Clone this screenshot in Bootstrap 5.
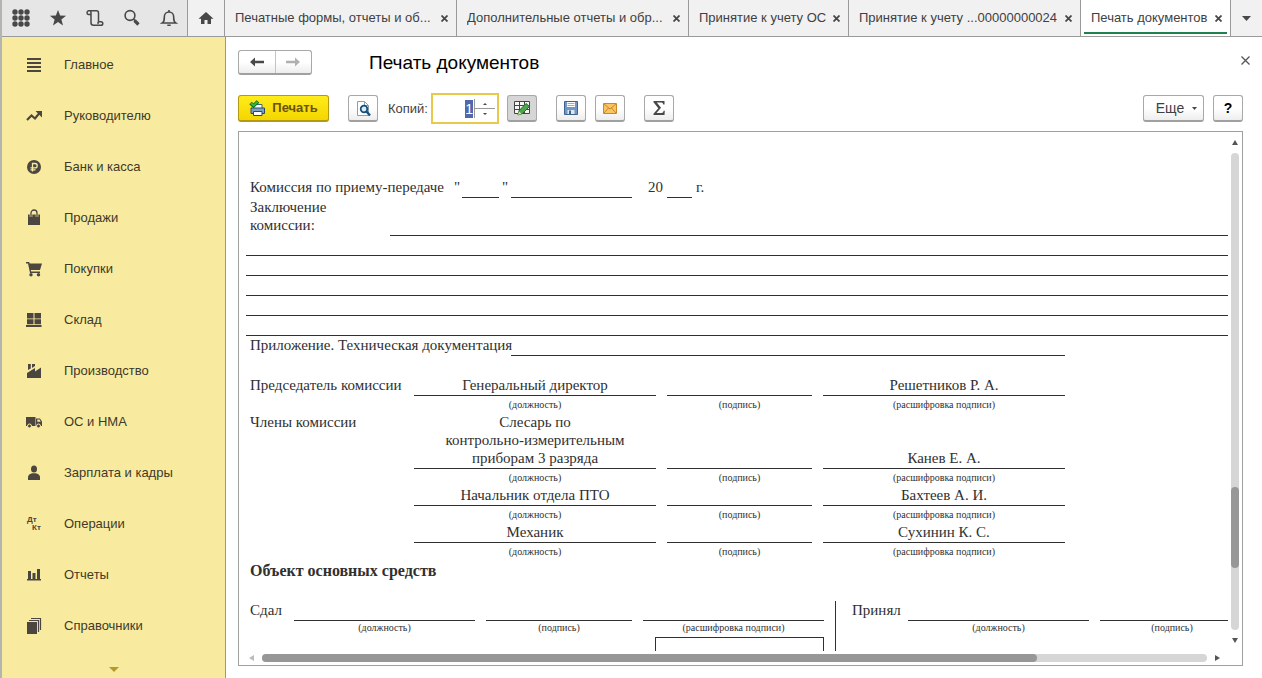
<!DOCTYPE html>
<html lang="ru">
<head>
<meta charset="utf-8">
<meta name="viewport" content="width=device-width, initial-scale=1">
<title>Печать документов</title>
<link href="https://cdn.jsdelivr.net/npm/bootstrap@5.3.0/dist/css/bootstrap.min.css" rel="stylesheet">
<style>
  body { font-family: "Liberation Sans", Arial, sans-serif; font-size: 13px; line-height: 18px; color: #3f3f3f; background: #fff; }
  svg { display: block; flex: none; }
  .app-shell { border-left: 2px solid #b4b4b0; }

  /* top bar */
  .topbar { height: 37px; background: #f1f1f1; border-bottom: 1px solid #9a9a9a; }
  .tools { width: 186px; background: #e6e6e6; border-right: 1px solid #9a9a9a; }
  .tools button, .home-tab, .more-tabs { border: 0; background: none; padding: 0; color: #484848; }
  .tools button { width: 37px; }
  .topbar .home-tab { width: 37px; border-right: 1px solid #9a9a9a; }
  .doc-tab { flex: 0 1 auto; min-width: 0; border-right: 1px solid #9a9a9a; padding: 0 5px 0 10px; position: relative; }
  .doc-tab a { color: #3f3f3f; text-decoration: none; }
  .tab-wide { flex-basis: 232px; }
  .tab-mid { flex-basis: 160px; }
  .tab-current { flex-basis: 150px; background: #fff; }
  .tab-current::after { content: ""; position: absolute; left: 3px; right: 3px; bottom: 2px; height: 2px; background: #1f8050; }
  .tab-close { border: 0; background: none; padding: 3px; color: #484848; }
  .more-tabs { width: 31px; }

  /* sections */
  .side { width: 224px; padding-top: 2px; background: #f8eb9f; border-right: 1px solid #a39b62; }
  .side a { height: 51px; flex: none; padding-left: 22px; gap: 20px; color: #40392a; text-decoration: none; }
  .side svg { color: #4b4640; }
  .side-more { padding-top: 16px; }

  /* form header and commands */
  .work { padding: 12px 19px 12px 12px; min-width: 0; }
  .form-title { font-size: 19px; line-height: 24px; color: #000; margin: 2px 0 0 57px; font-weight: 400; }
  .commands { margin-top: 18px; }
  .near { margin-left: 9px; }
  .apart { margin-left: 19px; }
  .cmd { height: 27px; border: 1px solid #a8a8a8; border-bottom: 2px solid #a0a0a0; border-radius: 3px; background: linear-gradient(#fff, #fff 50%, #ededed); color: #3f3f3f; padding: 0; display: flex; align-items: center; justify-content: center; }
  .cmd-icon { width: 30px; }
  .cmd-pressed { background: #d6d6d6; }
  .cmd-print { width: 91px; gap: 6px; background: linear-gradient(#ffec1a, #f4d600); border-color: #b39a12; color: #6b5306; font-weight: 700; }
  .cmd-more { width: 61px; gap: 8px; padding-left: 6px; font-size: 14px; }
  .cmd-help { font-size: 14px; font-weight: 700; color: #000; }
  .nav-pair { width: 74px; height: 25px; }
  .nav-pair button { flex: 1; border: 0; background: none; padding: 0; }
  .nav-pair button + button { border-left: 1px solid #c4c4c4; }
  .copies-label { margin: 0 3px 0 10px; }
  .copies { width: 68px; height: 31px; border: 2px solid #e8c94b; background: #fff; padding: 4px 2px 4px 4px; }
  .copies input { width: 100%; min-width: 0; border: 0; padding: 0 1px 0 0; outline: 0; text-align: right; font-size: 14px; line-height: 18px; color: #3f3f3f; appearance: textfield; }
  .copies input::-webkit-inner-spin-button { display: none; }
  .copies input::selection { background: #4f68ae; color: #fff; }
  .spin { flex: none; width: 21px; border-left: 1px solid #999; }
  .spin button { flex: 1; border: 0; background: none; padding: 0; }
  .spin button + button { border-top: 1px solid #999; }
  .close-form { border: 0; background: none; padding: 2px 2px 6px; margin-right: -10px; color: #555; }

  /* printed sheet */
  .viewer { border: 1px solid #a0a0a0; min-height: 0; margin-top: 7px; }
  .sheet { font-family: "Liberation Serif", "Times New Roman", serif; font-size: 15px; line-height: 18px; color: #303030; padding: 46px 0 0 7px; min-width: 0; overflow: hidden; white-space: nowrap; }
  .lbl { padding-left: 4px; }
  .ln { border-bottom: 1px solid #303030; min-height: 20px; padding-bottom: 1px; text-align: center; }
  .cap { font-size: 10px; line-height: 18px; height: 17px; text-align: center; }
  .cap-low { line-height: 14px; height: 16px; }
  .date-row { display: grid; grid-template-columns: 208px 8px 37px 12px 121px 35px 25px auto; }
  .findings { padding-bottom: 2px; width: 144px; }
  .annex { width: 265px; }
  .annex + .ln { width: 554px; }
  .signs-grid { display: grid; grid-template-columns: 168px 242px 11px 145px 11px 242px; align-items: end; padding-top: 20px; }
  .signs-grid .lbl { align-self: start; }
  .subject { font-size: 16px; font-weight: 700; height: 41px; padding-top: 2px; }
  .handover { display: grid; grid-template-columns: 48px 181px 11px 146px 11px 181px 11px 73px 181px 11px minmax(0, 1fr); }
  .divider { border-left: 1px solid #303030; }
  .stampbox { border: 1px solid #303030; border-bottom: 0; margin-left: 12px; }

  /* scroll bars */
  .bar-v { width: 14px; padding: 8px 0; }
  .bar-v .track { width: 8px; }
  .bar-h { height: 14px; padding: 0 22px 0 10px; }
  .bar-h .thumb { height: 8px; }
  .track { background: #d6d6d6; border-radius: 4px; flex: 1; }
  .thumb { background: #979797; border-radius: 4px; }
</style>
</head>
<body>
<div class="app-shell d-flex flex-column vh-100 overflow-hidden">
  <header class="topbar d-flex flex-shrink-0">
    <div class="tools d-flex align-items-center flex-shrink-0">
      <button class="d-flex justify-content-center" aria-label="Меню"><svg width="18" height="18" fill="currentColor"><g id="dots"><circle cx="3" cy="3" r="2.7"/><circle cx="9" cy="3" r="2.7"/><circle cx="15" cy="3" r="2.7"/></g><use href="#dots" y="6"/><use href="#dots" y="12"/></svg></button>
      <button class="d-flex justify-content-center" aria-label="Избранное"><svg width="18" height="18" viewBox="0 0 18 18" fill="currentColor"><path d="M9 1l2.1 5.6 6 .2-4.7 3.7 1.6 5.9L9 13l-5 3.4 1.6-5.9L.9 6.8l6-.2z"/></svg></button>
      <button class="d-flex justify-content-center" aria-label="История"><svg width="18" height="18" viewBox="0 0 18 18" fill="none" stroke="currentColor" stroke-width="1.500"><path d="M5 5.500H2.500A1.900 1.900 0 0 1 2.500 1.800H10.500Q12.500 1.800 12.500 4V12.700H15A1.800 1.800 0 0 1 15 16.300H7.500Q5 16.300 5 13.800V3.500Q5 2 4 1.900M12.500 12.700Q11.500 13.500 12.300 15"/></svg></button>
      <button class="d-flex justify-content-center" aria-label="Поиск"><svg width="18" height="18" viewBox="0 0 18 18" fill="none" stroke="currentColor"><circle cx="7" cy="6.500" r="4.900" stroke-width="1.600"/><path d="M10.400 10L12 11.600" stroke-width="1.500"/><path d="M11.500 11.500l4 4" stroke-width="3.200"/></svg></button>
      <button class="d-flex justify-content-center" aria-label="Уведомления"><svg width="18" height="18" viewBox="0 0 18 18" fill="none" stroke="currentColor" stroke-width="1.600"><path d="M2.300 14C4.500 12.500 4.300 10.500 4.300 8C4.300 4.800 6.500 3 9 3S13.700 4.800 13.700 8C13.700 10.500 13.500 12.500 15.700 14Z"/><path d="M9 1v2M7.300 16.300h3.400"/></svg></button>
    </div>
    <button class="home-tab d-flex align-items-center justify-content-center flex-shrink-0" aria-label="Начальная страница"><svg width="16" height="14" fill="currentColor"><path d="M8 1l7.500 6.800H13V13H9.500V9h-3v4H3V7.800H.5z"/></svg></button>
    <div class="doc-tab tab-wide d-flex align-items-center justify-content-between"><a href="#" class="text-truncate">Печатные формы, отчеты и об...</a><button class="tab-close" aria-label="Закрыть"><svg width="7" height="7" stroke="currentColor" stroke-width="1.800"><path d="M.5.5l6 6M6.500.5l-6 6"/></svg></button></div>
    <div class="doc-tab tab-wide d-flex align-items-center justify-content-between"><a href="#" class="text-truncate">Дополнительные отчеты и обр...</a><button class="tab-close" aria-label="Закрыть"><svg width="7" height="7" stroke="currentColor" stroke-width="1.800"><path d="M.5.5l6 6M6.500.5l-6 6"/></svg></button></div>
    <div class="doc-tab tab-mid d-flex align-items-center justify-content-between"><a href="#" class="text-truncate">Принятие к учету ОС</a><button class="tab-close" aria-label="Закрыть"><svg width="7" height="7" stroke="currentColor" stroke-width="1.800"><path d="M.5.5l6 6M6.500.5l-6 6"/></svg></button></div>
    <div class="doc-tab tab-wide d-flex align-items-center justify-content-between"><a href="#" class="text-truncate">Принятие к учету ...00000000024</a><button class="tab-close" aria-label="Закрыть"><svg width="7" height="7" stroke="currentColor" stroke-width="1.800"><path d="M.5.5l6 6M6.500.5l-6 6"/></svg></button></div>
    <div class="doc-tab tab-current d-flex align-items-center justify-content-between"><a href="#" class="text-truncate">Печать документов</a><button class="tab-close" aria-label="Закрыть"><svg width="7" height="7" stroke="currentColor" stroke-width="1.800"><path d="M.5.5l6 6M6.500.5l-6 6"/></svg></button></div>
    <button class="more-tabs d-flex align-items-center justify-content-center ms-auto" aria-label="Все вкладки"><svg width="9" height="5" fill="currentColor"><path d="M0 0h9L4.500 5z"/></svg></button>
  </header>

  <div class="d-flex flex-grow-1 overflow-hidden">
    <nav class="side d-flex flex-column flex-shrink-0" aria-label="Разделы">
      <a href="#" class="d-flex align-items-center"><svg width="20" height="20" stroke="currentColor" stroke-width="2"><path d="M3 4h14M3 8h14M3 12h14M3 16h14"/></svg>Главное</a>
      <a href="#" class="d-flex align-items-center"><svg width="20" height="20" fill="none" stroke="currentColor" stroke-width="2.200"><path d="M3 14l4.500-4.500 3.500 3L15.500 7"/><path d="M11.500 5H18v6.500z" fill="currentColor" stroke="none"/></svg>Руководителю</a>
      <a href="#" class="d-flex align-items-center"><svg width="20" height="20"><circle cx="10" cy="10" r="7" fill="currentColor"/><path d="M8.500 14.500V6.500H11a2.200 2.200 0 0 1 0 4.400H6.500M6.500 12.800h5" fill="none" stroke="#f8eb9f" stroke-width="1.300"/></svg>Банк и касса</a>
      <a href="#" class="d-flex align-items-center"><svg width="20" height="20" fill="currentColor"><path d="M4 6.500h12V17H4z"/><path d="M7 9V5a3 3 0 0 1 6 0v4" fill="none" stroke="#f8eb9f" stroke-width="2.600"/><path d="M7 9V5a3 3 0 0 1 6 0v4" fill="none" stroke="currentColor" stroke-width="1.300"/></svg>Продажи</a>
      <a href="#" class="d-flex align-items-center"><svg width="20" height="20" fill="currentColor"><path d="M2 3h3.200l.5 1.500H18L16 11H6.800l.4 1.500H16V14H6L4 4.500H2z"/><circle cx="7" cy="15.800" r="1.700"/><circle cx="14.500" cy="15.800" r="1.700"/></svg>Покупки</a>
      <a href="#" class="d-flex align-items-center"><svg width="20" height="20" fill="currentColor"><path d="M3 3h6.500v5.500H3zM10.500 3H17v5.500h-6.500zM3 9.300h6.500v5H3zM10.500 9.300H17v5h-6.500zM2 15h15.500v2H2z"/></svg>Склад</a>
      <a href="#" class="d-flex align-items-center"><svg width="20" height="20" fill="currentColor"><path d="M3 17v-5l8-5v3.500L17 6.500V17zM4 3h2.800v4.500L4 9zM8 3h3v2L8 7z"/></svg>Производство</a>
      <a href="#" class="d-flex align-items-center"><svg width="20" height="20" fill="currentColor"><path d="M2 5h9.500v9H2zM12 6.500h4l2 3V14h-6z"/><path d="M13.300 7.600h2.200l1.200 2.200h-3.400z" fill="#f8eb9f"/><g stroke="#f8eb9f"><circle cx="5.500" cy="14" r="2"/><circle cx="14.500" cy="14" r="2"/></g></svg>ОС и НМА</a>
      <a href="#" class="d-flex align-items-center"><svg width="20" height="20" fill="currentColor"><ellipse cx="10" cy="6" rx="3" ry="3.600"/><path d="M4 17v-3q0-2.500 4-3.800h4q4 1.300 4 3.800v3z"/></svg>Зарплата и кадры</a>
      <a href="#" class="d-flex align-items-center"><svg width="20" height="20" fill="currentColor" font-family="Liberation Sans" font-weight="700" font-size="8"><text x="3" y="8">Дт</text><text x="8" y="16">Кт</text></svg>Операции</a>
      <a href="#" class="d-flex align-items-center"><svg width="20" height="20" fill="currentColor"><path d="M4 6h3v8H4zM8.500 8h3v6h-3zM13 4h3v10h-3zM3 14h14v1.500H3z"/></svg>Отчеты</a>
      <a href="#" class="d-flex align-items-center"><svg width="20" height="20"><path d="M3 6h10v12H3z" fill="currentColor"/><path d="M5 4.500h9.500V16M7 2.500h9.500V14" fill="none" stroke="currentColor" stroke-width="1.200"/></svg>Справочники</a>
      <div class="side-more d-flex justify-content-center"><svg width="10" height="5"><path d="M0 0h10L5 5z" fill="#b39a2e"/></svg></div>
    </nav>

    <main class="work d-flex flex-column flex-grow-1">
      <div class="d-flex align-items-center">
        <div class="cmd nav-pair align-items-stretch">
          <button aria-label="Назад" class="d-flex align-items-center justify-content-center"><svg width="14" height="10" fill="#484848"><path d="M0 5l5-4.500v3.300h9v2.400H5v3.300z"/></svg></button>
          <button aria-label="Вперед" class="d-flex align-items-center justify-content-center"><svg width="14" height="10" fill="#b0b0b0"><path d="M14 5L9 .5v3.300H0v2.400h9v3.300z"/></svg></button>
        </div>
        <h1 class="form-title">Печать документов</h1>
        <button class="close-form ms-auto" aria-label="Закрыть форму"><svg width="11" height="9" stroke="currentColor" stroke-width="1.300"><path d="M1.500.5l8 8M9.500.5l-8 8"/></svg></button>
      </div>

      <div class="commands d-flex align-items-center">
        <button class="cmd cmd-print"><svg width="17" height="17" viewBox="0 0 17 17"><path d="M4.500 4.500h8.500v4H4.500z" fill="#fff" stroke="#3c617d"/><path d="M2 8h13.500v5.500H2z" fill="#7ba3c0" stroke="#284c66" rx="1"/><path d="M4.500 11.500h8.500v4H4.500z" fill="#fff" stroke="#284c66"/><path d="M1.500 3l3 2.800L9 1.500" fill="none" stroke="#0f6b1c" stroke-width="3.600"/><path d="M1.800 3l2.700 2.500L8.700 1.800" fill="none" stroke="#35b53f" stroke-width="2"/></svg>Печать</button>
        <button class="cmd cmd-icon apart" aria-label="Предварительный просмотр"><svg width="16" height="17" viewBox="0 0 16 17"><path d="M2.500 1.500h7l4 4v10h-11z" fill="#fff" stroke="#8aa0b2"/><path d="M9.500 1.500v4h4" fill="none" stroke="#8aa0b2"/><circle cx="9" cy="9" r="3.300" fill="#d8ecf8" stroke="#184f7c" stroke-width="1.800"/><path d="M11.500 11.500l3.500 4" stroke="#184f7c" stroke-width="2.400"/></svg></button>
        <label for="copies" class="copies-label">Копий:</label>
        <div class="copies d-flex">
          <input id="copies" type="number" min="1" value="1">
          <div class="spin d-flex flex-column">
            <button class="d-flex align-items-center justify-content-center" aria-label="Больше"><svg width="4" height="2" fill="#484848"><path d="M0 2h4L2 0z"/></svg></button>
            <button class="d-flex align-items-center justify-content-center" aria-label="Меньше"><svg width="4" height="2" fill="#484848"><path d="M0 0h4L2 2z"/></svg></button>
          </div>
        </div>
        <button class="cmd cmd-icon cmd-pressed ms-2" aria-label="Редактирование"><svg width="18" height="16" viewBox="0 0 18 16"><path d="M1.500 1.500h15v12h-15z" fill="#f6f6f6" stroke="#444"/><path d="M1.500 5.500h15M1.500 9.500h15M6.500 1.500v12M11.500 1.500v12" stroke="#444"/><path d="M5 15l1.200-4.500L13 3.500l3.500 3L9.500 13.500z" fill="#4ca64c" stroke="#256b2b"/><path d="M5 15l1-3.500 2.500 2.300z" fill="#f0d9a8"/></svg></button>
        <button class="cmd cmd-icon apart" aria-label="Сохранить"><svg width="16" height="16" viewBox="0 0 16 16"><path d="M1.500 1.500h13v13h-13z" fill="#7297c4" stroke="#3f648e"/><path d="M4 2h8v5H4z" fill="#fff"/><path d="M4.500 3.500h7M4.500 5.500h7" stroke="#9bb0c8"/><path d="M4.500 10h7v4h-7z" fill="#dfe7f0"/><path d="M6 10.500h2V14H6z" fill="#3f648e"/></svg></button>
        <button class="cmd cmd-icon near" aria-label="Отправить"><svg width="14" height="11" viewBox="0 0 14 11"><path d="M.5.5h13v10H.5z" fill="#fac465" stroke="#c98a25"/><path d="M1 1l6 5 6-5M1 10l4.500-5M13 10L8.500 5" fill="none" stroke="#c98a25"/></svg></button>
        <button class="cmd cmd-icon apart" aria-label="Сумма"><svg width="12" height="14" viewBox="0 0 12 14" fill="#484848"><path d="M.5 0h11v3.500h-1.200Q10 1.600 8.500 1.600H3.800L8 6.800 3.500 12h5.200q1.600 0 2-2.200h1.100L11.500 14H.5v-1.200L5.300 7.200.5 1.200z"/></svg></button>
        <button class="cmd cmd-more ms-auto">Еще<svg width="5" height="3" fill="#484848"><path d="M0 0h5L2.500 3z"/></svg></button>
        <button class="cmd cmd-icon cmd-help near" aria-label="Справка">?</button>
      </div>

      <div class="viewer d-flex flex-column flex-grow-1">
        <div class="d-flex flex-grow-1 overflow-hidden">
          <div class="sheet flex-grow-1">
            <div class="date-row"><span class="lbl">Комиссия по приему-передаче</span><span>"</span><span class="ln"></span><span class="text-center">"</span><span class="ln"></span><span class="text-end pe-1">20</span><span class="ln"></span><span class="ps-1">г.</span></div>
            <div class="d-flex"><div class="lbl findings">Заключение<br>комиссии:</div><div class="ln flex-grow-1"></div></div>
            <div class="ln"></div><div class="ln"></div><div class="ln"></div><div class="ln"></div><div class="ln"></div>
            <div class="d-flex"><div class="lbl annex">Приложение. Техническая документация</div><div class="ln"></div></div>
            <div class="signs-grid">
              <div class="lbl">Председатель комиссии</div><div class="ln">Генеральный директор</div><i></i><div class="ln"></div><i></i><div class="ln">Решетников Р. А.</div>
              <i></i><div class="cap">(должность)</div><i></i><div class="cap">(подпись)</div><i></i><div class="cap">(расшифровка подписи)</div>
              <div class="lbl">Члены комиссии</div><div class="ln">Слесарь по<br>контрольно-измерительным<br>приборам 3 разряда</div><i></i><div class="ln"></div><i></i><div class="ln">Канев Е. А.</div>
              <i></i><div class="cap">(должность)</div><i></i><div class="cap">(подпись)</div><i></i><div class="cap">(расшифровка подписи)</div>
              <i></i><div class="ln">Начальник отдела ПТО</div><i></i><div class="ln"></div><i></i><div class="ln">Бахтеев А. И.</div>
              <i></i><div class="cap">(должность)</div><i></i><div class="cap">(подпись)</div><i></i><div class="cap">(расшифровка подписи)</div>
              <i></i><div class="ln">Механик</div><i></i><div class="ln"></div><i></i><div class="ln">Сухинин К. С.</div>
              <i></i><div class="cap">(должность)</div><i></i><div class="cap">(подпись)</div><i></i><div class="cap">(расшифровка подписи)</div>
            </div>
            <div class="lbl subject">Объект основных средств</div>
            <div class="handover">
              <span class="lbl">Сдал</span><span class="ln"></span><i></i><span class="ln"></span><i></i><span class="ln"></span><i></i><span class="divider ps-3">Принял</span><span class="ln"></span><i></i><span class="ln"></span>
              <i></i><span class="cap cap-low">(должность)</span><i></i><span class="cap cap-low">(подпись)</span><i></i><span class="cap cap-low">(расшифровка подписи)</span><i></i><span class="divider"></span><span class="cap cap-low">(должность)</span><i></i><span class="cap cap-low ps-3">(подпись)</span>
              <i></i><i></i><i></i><i></i><i></i><span class="stampbox"></span><i></i><span class="divider">&nbsp;</span>
            </div>
          </div>
          <div class="bar-v d-flex flex-column align-items-center flex-shrink-0">
            <svg width="6" height="5" fill="#555"><path d="M0 5h6L3 0z"/></svg>
            <div class="track my-2"><div style="height:70%"></div><div class="thumb" style="height:17%"></div></div>
            <svg width="6" height="5" fill="#555"><path d="M0 0h6L3 5z"/></svg>
          </div>
        </div>
        <div class="bar-h d-flex align-items-center flex-shrink-0">
          <svg width="5" height="6" fill="#bbb"><path d="M5 0v6L0 3z"/></svg>
          <div class="track mx-2"><div class="thumb" style="width:82%"></div></div>
          <svg width="5" height="6" fill="#555"><path d="M0 0v6l5-3z"/></svg>
        </div>
      </div>
    </main>
  </div>
</div>
<script src="https://cdn.jsdelivr.net/npm/bootstrap@5.3.0/dist/js/bootstrap.bundle.min.js"></script>
<script>
  const copies = document.getElementById('copies');
  copies.focus();
  copies.select();
</script>
</body>
</html>
